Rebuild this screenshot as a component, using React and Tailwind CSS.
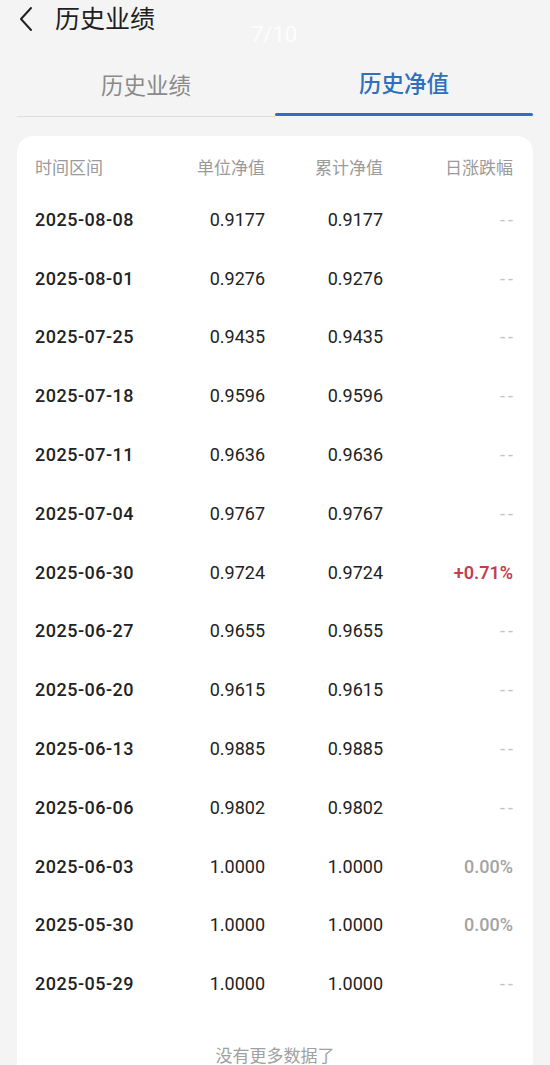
import React from "react";

const rows = [
  ["2025-08-08", "0.9177", "0.9177", "--"],
  ["2025-08-01", "0.9276", "0.9276", "--"],
  ["2025-07-25", "0.9435", "0.9435", "--"],
  ["2025-07-18", "0.9596", "0.9596", "--"],
  ["2025-07-11", "0.9636", "0.9636", "--"],
  ["2025-07-04", "0.9767", "0.9767", "--"],
  ["2025-06-30", "0.9724", "0.9724", "+0.71%"],
  ["2025-06-27", "0.9655", "0.9655", "--"],
  ["2025-06-20", "0.9615", "0.9615", "--"],
  ["2025-06-13", "0.9885", "0.9885", "--"],
  ["2025-06-06", "0.9802", "0.9802", "--"],
  ["2025-06-03", "1.0000", "1.0000", "0.00%"],
  ["2025-05-30", "1.0000", "1.0000", "0.00%"],
  ["2025-05-29", "1.0000", "1.0000", "--"],
];

const font = { fontFamily: '"Roboto", "Noto Sans CJK SC", sans-serif' };

function ChangeCell({ value }) {
  if (value === "--") {
    return <span className="text-[#c4c4c4] tracking-[3px] mr-[-3px]">--</span>;
  }
  if (value.startsWith("+")) {
    return <span className="text-[#c53b50] font-semibold">{value}</span>;
  }
  return <span className="text-[#a3a3a3] font-medium">{value}</span>;
}

export default function App() {
  return (
    <div
      className="w-[550px] h-[1065px] overflow-hidden bg-[#f4f4f4] relative"
      style={font}
    >
      {/* Top bar */}
      <div className="flex items-center h-[38px] pl-[18px]">
        <svg width="16" height="26" viewBox="0 0 16 26" fill="none">
          <polyline
            points="13,2 3,13 13,24"
            stroke="#222"
            strokeWidth="2"
            strokeLinecap="round"
            strokeLinejoin="round"
          />
        </svg>
        <span className="ml-[21px] text-[25px] text-[#1f1f1f] leading-none">
          历史业绩
        </span>
      </div>
      <div className="absolute left-[251px] top-[24px] text-[22px] text-white/80 leading-none">
        7/10
      </div>

      {/* Tabs */}
      <div className="flex mx-[17px] mt-[27px] h-[52px]">
        <div className="w-[258px] flex flex-col">
          <div className="flex-1 flex items-center justify-center pb-[8px] text-[22.5px] text-[#8a8a8a]">
            历史业绩
          </div>
          <div className="h-[1px] bg-[#dedede]" />
        </div>
        <div className="flex-1 flex flex-col">
          <div className="flex-1 flex items-center justify-center pb-[8px] text-[22.5px] text-[#2e6fbf] font-medium">
            历史净值
          </div>
          <div className="h-[3px] bg-[#2e6fbf] rounded-full mb-[1px]" />
        </div>
      </div>

      {/* Card */}
      <div className="mx-[17px] mt-[19px] bg-white rounded-2xl pt-[12px] px-[18px] pb-[40px]">
        <div className="grid grid-cols-[130px_100px_118px_130px] h-[42px] items-center text-[17px] text-[#9a9a9a]">
          <span>时间区间</span>
          <span className="text-right">单位净值</span>
          <span className="text-right">累计净值</span>
          <span className="text-right">日涨跌幅</span>
        </div>
        {rows.map((r) => (
          <div
            key={r[0]}
            className="grid grid-cols-[130px_100px_118px_130px] h-[58.8px] items-center text-[18px] text-[#222]"
          >
            <span className="font-medium tracking-[0.5px]">{r[0]}</span>
            <span className="text-right">{r[1]}</span>
            <span className="text-right">{r[2]}</span>
            <span className="text-right">
              <ChangeCell value={r[3]} />
            </span>
          </div>
        ))}
        <div className="text-center text-[17px] text-[#a0a0a0] pt-[31px]">
          没有更多数据了
        </div>
      </div>
    </div>
  );
}
